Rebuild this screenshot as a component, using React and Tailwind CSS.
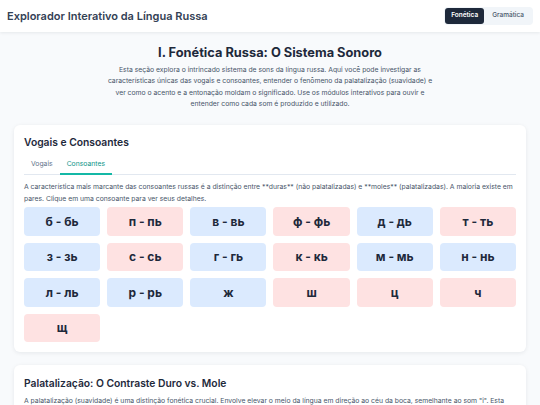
import React, { useState } from 'react';

// Consonant pairs: voiced (blue) vs voiceless (red)
const CONSONANTS = [
    { label: "б - бь", voiced: true },
    { label: "п - пь", voiced: false },
    { label: "в - вь", voiced: true },
    { label: "ф - фь", voiced: false },
    { label: "д - дь", voiced: true },
    { label: "т - ть", voiced: false },
    { label: "з - зь", voiced: true },
    { label: "с - сь", voiced: false },
    { label: "г - гь", voiced: true },
    { label: "к - кь", voiced: false },
    { label: "м - мь", voiced: true },
    { label: "н - нь", voiced: true },
    { label: "л - ль", voiced: true },
    { label: "р - рь", voiced: true },
    { label: "ж", voiced: true },
    { label: "ш", voiced: false },
    { label: "ц", voiced: false },
    { label: "ч", voiced: false },
    { label: "щ", voiced: false }
];

const Header = ({ section, setSection }) => (
    <header className="h-[32px] bg-white shadow-[0_1px_3px_rgba(15,23,42,0.08)] flex items-center justify-between pl-[7px] pr-[7px] relative z-10">
        <h1 className="text-[11px] font-semibold text-[#334155]">Explorador Interativo da Língua Russa</h1>
        <div className="flex items-center bg-[#f1f5f9] rounded-[4px] p-[1px]">
            {["Fonética", "Gramática"].map((s) => (
                <button
                    key={s}
                    onClick={() => setSection(s)}
                    className={
                        section === s
                            ? "h-[16px] px-[6px] rounded-[3px] bg-[#1e293b] text-white text-[6.5px] font-semibold"
                            : "h-[16px] px-[8px] rounded-[3px] text-[#475569] text-[6.5px] font-medium"
                    }
                >
                    {s}
                </button>
            ))}
        </div>
    </header>
);

export default function App() {
    const [section, setSection] = useState("Fonética");
    const [tab, setTab] = useState("Consoantes");

    return (
        <div className="min-h-screen bg-[#f8fafc] font-['Inter',sans-serif] text-[#1e293b]">
            <Header section={section} setSection={setSection} />

            <main className="px-[14px] pb-[20px]">
                {/* Intro */}
                <section className="text-center pt-[12px] pb-[16px]">
                    <h2 className="text-[12.8px] font-bold text-[#1e293b] leading-[18px]">I. Fonética Russa: O Sistema Sonoro</h2>
                    <p className="mt-[2px] mx-auto max-w-[332px] text-[6.8px] leading-[11.3px] text-[#475569]">
                        Esta seção explora o intrincado sistema de sons da língua russa. Aqui você pode investigar as características únicas das vogais e consoantes, entender o fenômeno da palatalização (suavidade) e ver como o acento e a entonação moldam o significado. Use os módulos interativos para ouvir e entender como cada som é produzido e utilizado.
                    </p>
                </section>

                {/* Vowels & consonants card */}
                <section className="bg-white rounded-[6px] shadow-[0_1px_4px_rgba(15,23,42,0.08)] p-[10px]">
                    <h3 className="text-[10.3px] font-semibold text-[#1e293b] leading-[14px]">Vogais e Consoantes</h3>
                    <div className="mt-[9px] flex border-b border-[#e2e8f0]">
                        {["Vogais", "Consoantes"].map((t) => (
                            <button
                                key={t}
                                onClick={() => setTab(t)}
                                className={
                                    tab === t
                                        ? "px-[7px] pb-[4px] pt-[1px] text-[6.8px] text-[#0d9488] border-b-2 border-[#14b8a6] -mb-px"
                                        : "px-[7px] pb-[4px] pt-[1px] text-[6.8px] text-[#64748b] border-b-2 border-transparent -mb-px"
                                }
                            >
                                {t}
                            </button>
                        ))}
                    </div>
                    <p className="mt-[6px] text-[6.8px] leading-[12px] text-[#475569]">
                        A característica mais marcante das consoantes russas é a distinção entre **duras** (não palatalizadas) e **moles** (palatalizadas). A maioria existe em pares. Clique em uma consoante para ver seus detalhes.
                    </p>
                    <div className="mt-[2px] grid grid-cols-6 gap-[7px]">
                        {CONSONANTS.map((c) => (
                            <button
                                key={c.label}
                                className={
                                    c.voiced
                                        ? "h-[28.5px] rounded-[4px] bg-[#dbeafe] text-[12px] font-bold text-[#1e293b]"
                                        : "h-[28.5px] rounded-[4px] bg-[#fee2e2] text-[12px] font-bold text-[#1e293b]"
                                }
                            >
                                {c.label}
                            </button>
                        ))}
                    </div>
                </section>

                {/* Palatalization card */}
                <section className="mt-[13px] bg-white rounded-[6px] shadow-[0_1px_4px_rgba(15,23,42,0.08)] p-[10px]">
                    <h3 className="text-[10.3px] font-semibold text-[#1e293b] leading-[14px] mt-[1px]">Palatalização: O Contraste Duro vs. Mole</h3>
                    <p className="mt-[5px] text-[6.8px] leading-[12px] text-[#475569]">
                        A palatalização (suavidade) é uma distinção fonética crucial. Envolve elevar o meio da língua em direção ao céu da boca, semelhante ao som "i". Esta característica altera o som da consoante e pode mudar completamente o significado de uma palavra.
                    </p>
                </section>
            </main>
        </div>
    );
}
